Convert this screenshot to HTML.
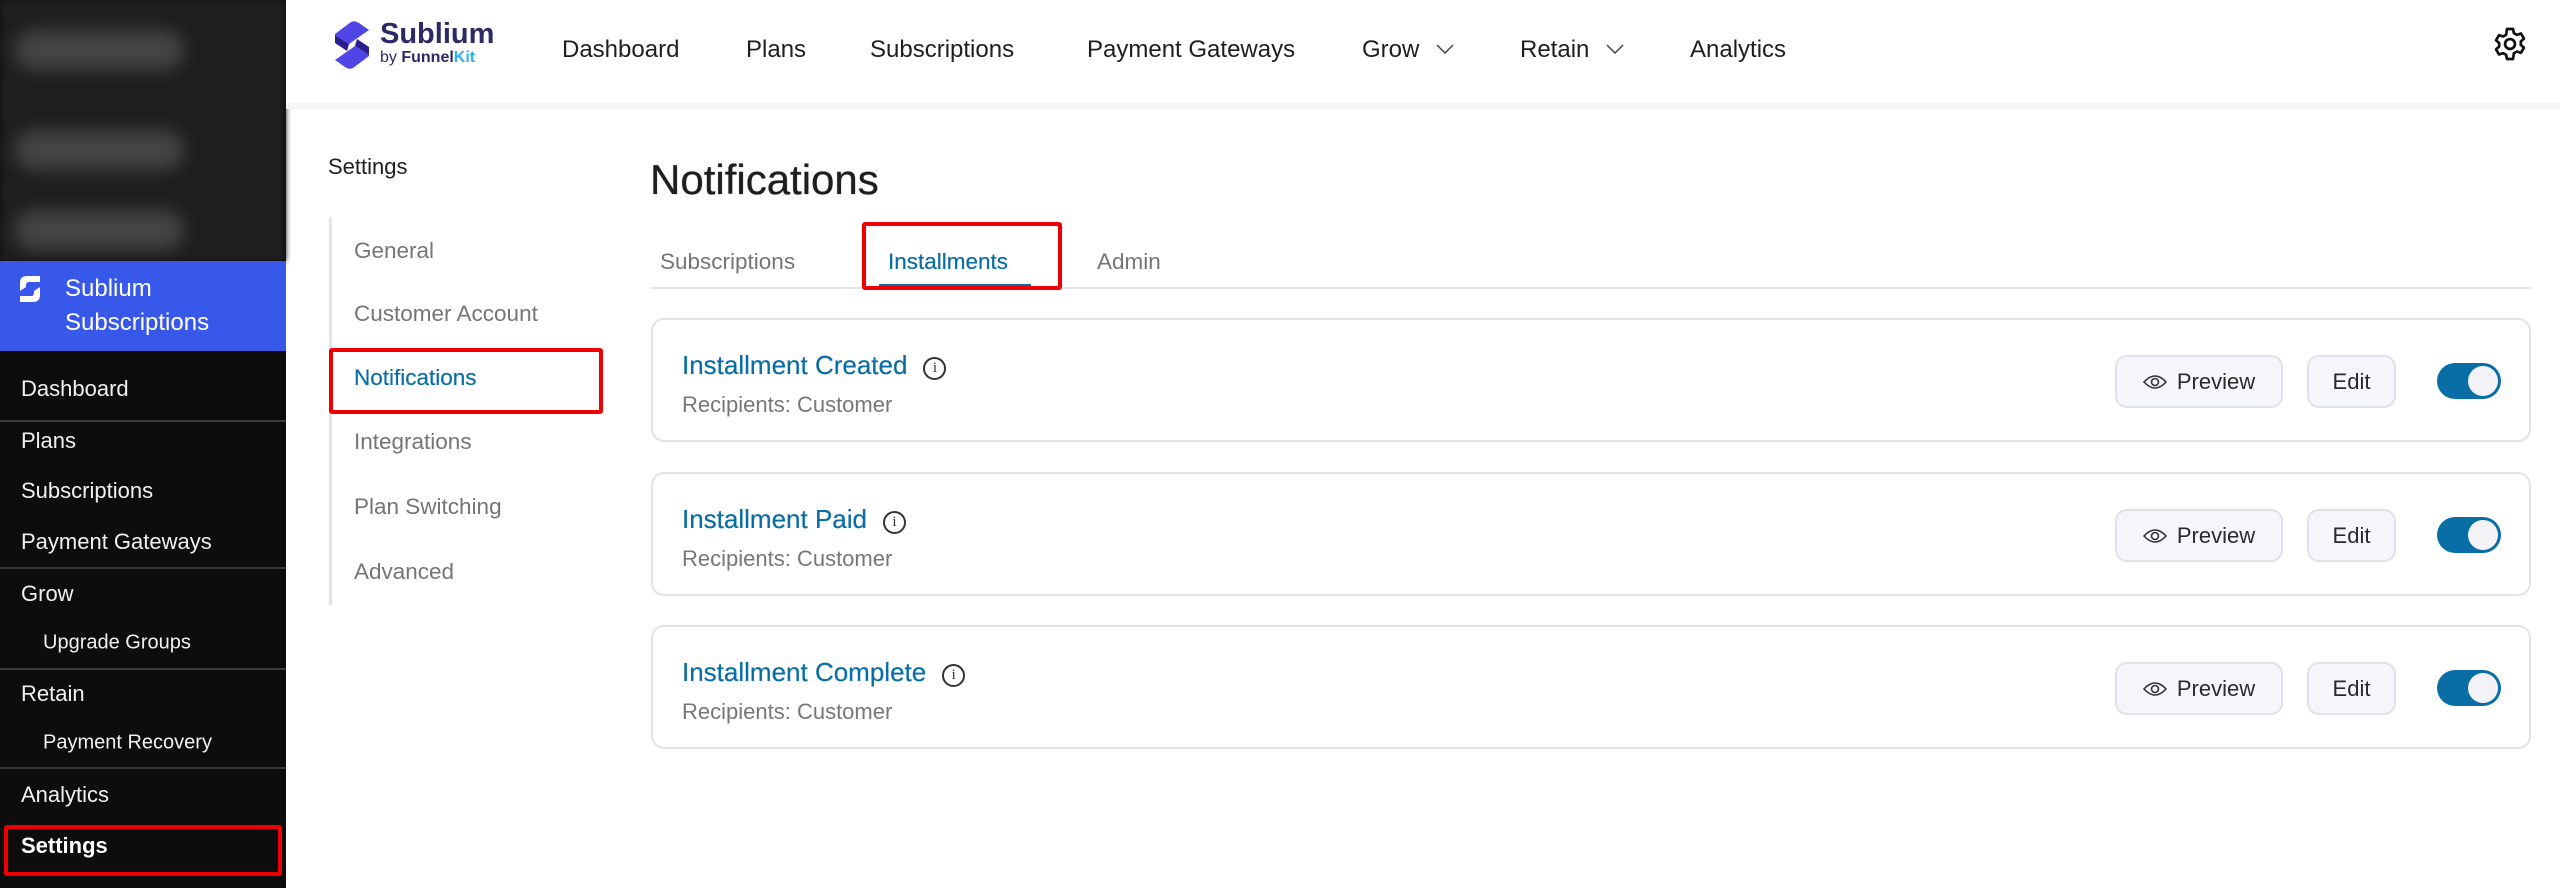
<!DOCTYPE html>
<html><head><meta charset="utf-8"><style>
*{margin:0;padding:0;box-sizing:border-box}
body{width:2560px;height:888px;overflow:hidden;background:#fff;font-family:"Liberation Sans",sans-serif;position:relative;color:#1e1e1e}
.a{position:absolute;white-space:nowrap}
#sb{position:absolute;left:0;top:0;width:286px;height:888px;background:#0d0d0d}
.sbt{position:absolute;left:0;top:0;width:286px;height:261px;background:#1e1e1e;filter:blur(3px)}
.blob{position:absolute;background:#444;border-radius:20px;filter:blur(8px)}
.sbi{position:absolute;left:21px;color:#f0f0f0;font-size:22px;transform:translateY(-50%)}
.sub{left:43px;font-size:20px}
.sep{position:absolute;left:0;width:286px;height:2px;background:#3a3a3a}
.nav{font-size:24px;color:#1e1e1e;transform:translateY(-50%)}
.ln{font-size:22.5px;color:#757575;transform:translateY(-50%)}
.card{position:absolute;left:651px;width:1880px;height:124px;border:2px solid #e2e2ec;border-radius:13px;background:#fff}
.ct{position:absolute;left:29px;top:30px;font-size:26px;color:#0a6ea6;text-shadow:0 0 .4px #0a6ea6}
.rc{position:absolute;left:29px;top:72px;font-size:22px;color:#777}
.btn{position:absolute;top:35px;height:53px;border:2px solid #e0e0ea;border-radius:12px;background:#f4f6fa;font-size:22px;color:#2a2a2a;display:flex;align-items:center;justify-content:center}
.tg{position:absolute;left:1784px;top:43px;width:64px;height:36px;border-radius:18px;background:#0a6ea6}
.tg:after{content:"";position:absolute;right:3px;top:3px;width:30px;height:30px;border-radius:50%;background:#f3f2f7}
.info{display:inline-block;width:23px;height:23px;border:2px solid #333;border-radius:50%;font-size:15px;text-align:center;line-height:19px;color:#333;margin-left:16px;vertical-align:2px;font-family:"Liberation Serif",serif;text-shadow:none}
</style></head><body>
<div id="sb">
 <div class="sbt">
  <div class="blob" style="left:14px;top:30px;width:170px;height:40px"></div>
  <div class="blob" style="left:14px;top:130px;width:170px;height:40px"></div>
  <div class="blob" style="left:14px;top:210px;width:170px;height:40px"></div>
 </div>
 <div style="position:absolute;left:0;top:261px;width:286px;height:90px;background:#3858e9"></div>
 <svg class="a" style="left:17px;top:274px" width="26" height="30" viewBox="0 0 26 30"><path d="M3 9 Q3 2 10 2 L23 2 L23 8 L12 8 Q9 8 9 11 L9 13 L3 17Z" fill="#fff"/><path d="M23 21 Q23 28 16 28 L3 28 L3 22 L14 22 Q17 22 17 19 L17 17 L23 13Z" fill="#fff"/></svg>
 <div class="a" style="left:65px;top:272px;font-size:24px;color:#fff;line-height:34px">Sublium<br>Subscriptions</div>
 <div class="sbi" style="top:389px">Dashboard</div>
 <div class="sep" style="top:420px"></div>
 <div class="sbi" style="top:441px">Plans</div>
 <div class="sbi" style="top:491px">Subscriptions</div>
 <div class="sbi" style="top:542px">Payment Gateways</div>
 <div class="sep" style="top:567px"></div>
 <div class="sbi" style="top:594px">Grow</div>
 <div class="sbi sub" style="top:643px">Upgrade Groups</div>
 <div class="sep" style="top:668px"></div>
 <div class="sbi" style="top:694px">Retain</div>
 <div class="sbi sub" style="top:743px">Payment Recovery</div>
 <div class="sep" style="top:767px"></div>
 <div class="sbi" style="top:795px">Analytics</div>
 <div class="sbi" style="top:846px;font-weight:bold;color:#fff">Settings</div>
 <div style="position:absolute;left:4px;top:825px;width:278px;height:51px;border:4px solid #e00;border-radius:3px"></div>
</div>
<div style="position:absolute;left:286px;top:0;width:2274px;height:103px;background:#fff;box-shadow:0 2px 6px rgba(0,0,0,.05)"></div>
<div style="position:absolute;left:286px;top:103px;width:2274px;height:6px;background:#f5f6f8"></div>
<svg class="a" style="left:332px;top:20px" width="40" height="50" viewBox="0 0 40 50"><path d="M3 14 L19 2 Q23 0 27 3 L37 10 L17 24 L3 15Z" fill="#4f46e5"/><path d="M3 15 L17 24 L15 31 L3 23Z" fill="#2b1f8f"/><path d="M37 36 L21 48 Q17 50 13 47 L3 40 L23 26 L37 35Z" fill="#4f46e5"/><path d="M37 35 L23 26 L25 19 L37 27Z" fill="#2b1f8f"/></svg>
<div class="a" style="left:380px;top:18px;font-size:29px;font-weight:bold;color:#2b2a66">Sublium</div>
<div class="a" style="left:380px;top:49px;font-size:16px;color:#2b2a66"><span>by </span><b>Funnel</b><b style="color:#2ab0f5">Kit</b></div>
<div class="a nav" style="left:562px;top:50px">Dashboard</div>
<div class="a nav" style="left:746px;top:50px">Plans</div>
<div class="a nav" style="left:870px;top:50px">Subscriptions</div>
<div class="a nav" style="left:1087px;top:50px">Payment Gateways</div>
<div class="a nav" style="left:1362px;top:50px">Grow</div>
<svg class="a" style="left:1436px;top:44px" width="18" height="10"><path d="M1 1 L9 9 L17 1" fill="none" stroke="#444" stroke-width="1.5"/></svg>
<div class="a nav" style="left:1520px;top:50px">Retain</div>
<svg class="a" style="left:1606px;top:44px" width="18" height="10"><path d="M1 1 L9 9 L17 1" fill="none" stroke="#444" stroke-width="1.5"/></svg>
<div class="a nav" style="left:1690px;top:50px">Analytics</div>
<svg class="a" style="left:2492px;top:26px" width="36" height="36" viewBox="0 0 24 24"><path fill="none" stroke="#111" stroke-width="1.8" stroke-linejoin="round" d="M10 2h4l.6 2.8 2 1.1 2.7-.9 2 3.4-2.1 1.9v2.3l2.1 1.9-2 3.4-2.7-.9-2 1.1L14 22h-4l-.6-2.8-2-1.1-2.7.9-2-3.4 2.1-1.9V11.4L2.7 9.5l2-3.4 2.7.9 2-1.1Z"/><circle cx="12" cy="12" r="3.3" fill="none" stroke="#111" stroke-width="1.8"/></svg>
<div class="a" style="left:328px;top:154px;font-size:22px;color:#1e1e1e">Settings</div>
<div style="position:absolute;left:329px;top:217px;width:3px;height:388px;background:#e4e4ec"></div>
<div class="a ln" style="left:354px;top:251px">General</div>
<div class="a ln" style="left:354px;top:314px">Customer Account</div>
<div class="a ln" style="left:354px;top:378px;color:#0a6ea6;text-shadow:0 0 .4px #0a6ea6">Notifications</div>
<div class="a ln" style="left:354px;top:442px">Integrations</div>
<div class="a ln" style="left:354px;top:507px">Plan Switching</div>
<div class="a ln" style="left:354px;top:572px">Advanced</div>
<div style="position:absolute;left:329px;top:348px;width:274px;height:66px;border:4px solid #e00;border-radius:3px"></div>
<div class="a" style="left:650px;top:156px;font-size:42px;color:#1e1e1e;text-shadow:0 0 .8px #1e1e1e">Notifications</div>
<div class="a" style="left:660px;top:249px;font-size:22.5px;color:#757575">Subscriptions</div>
<div class="a" style="left:888px;top:249px;font-size:22.5px;color:#0a6ea6;text-shadow:0 0 .4px #0a6ea6">Installments</div>
<div class="a" style="left:1097px;top:249px;font-size:22.5px;color:#757575">Admin</div>
<div style="position:absolute;left:651px;top:287px;width:1880px;height:2px;background:#e4e4ec"></div>
<div style="position:absolute;left:879px;top:284px;width:152px;height:3px;background:#0a6ea6"></div>
<div style="position:absolute;left:862px;top:222px;width:200px;height:68px;border:4px solid #e00;border-radius:3px"></div>

<div class="card" style="top:318px"><div class="ct">Installment Created<span class="info">i</span></div><div class="rc">Recipients: Customer</div>
<div class="btn" style="left:1462px;width:168px"><svg width="24" height="16" viewBox="0 0 24 16" style="margin-right:10px"><path d="M1 8 Q12 -4 23 8 Q12 20 1 8Z" fill="none" stroke="#333" stroke-width="1.6"/><circle cx="12" cy="8" r="3.5" fill="none" stroke="#333" stroke-width="1.6"/></svg>Preview</div>
<div class="btn" style="left:1654px;width:89px">Edit</div><div class="tg"></div></div>

<div class="card" style="top:472px"><div class="ct">Installment Paid<span class="info">i</span></div><div class="rc">Recipients: Customer</div>
<div class="btn" style="left:1462px;width:168px"><svg width="24" height="16" viewBox="0 0 24 16" style="margin-right:10px"><path d="M1 8 Q12 -4 23 8 Q12 20 1 8Z" fill="none" stroke="#333" stroke-width="1.6"/><circle cx="12" cy="8" r="3.5" fill="none" stroke="#333" stroke-width="1.6"/></svg>Preview</div>
<div class="btn" style="left:1654px;width:89px">Edit</div><div class="tg"></div></div>

<div class="card" style="top:625px"><div class="ct">Installment Complete<span class="info">i</span></div><div class="rc">Recipients: Customer</div>
<div class="btn" style="left:1462px;width:168px"><svg width="24" height="16" viewBox="0 0 24 16" style="margin-right:10px"><path d="M1 8 Q12 -4 23 8 Q12 20 1 8Z" fill="none" stroke="#333" stroke-width="1.6"/><circle cx="12" cy="8" r="3.5" fill="none" stroke="#333" stroke-width="1.6"/></svg>Preview</div>
<div class="btn" style="left:1654px;width:89px">Edit</div><div class="tg"></div></div>
</body></html>
